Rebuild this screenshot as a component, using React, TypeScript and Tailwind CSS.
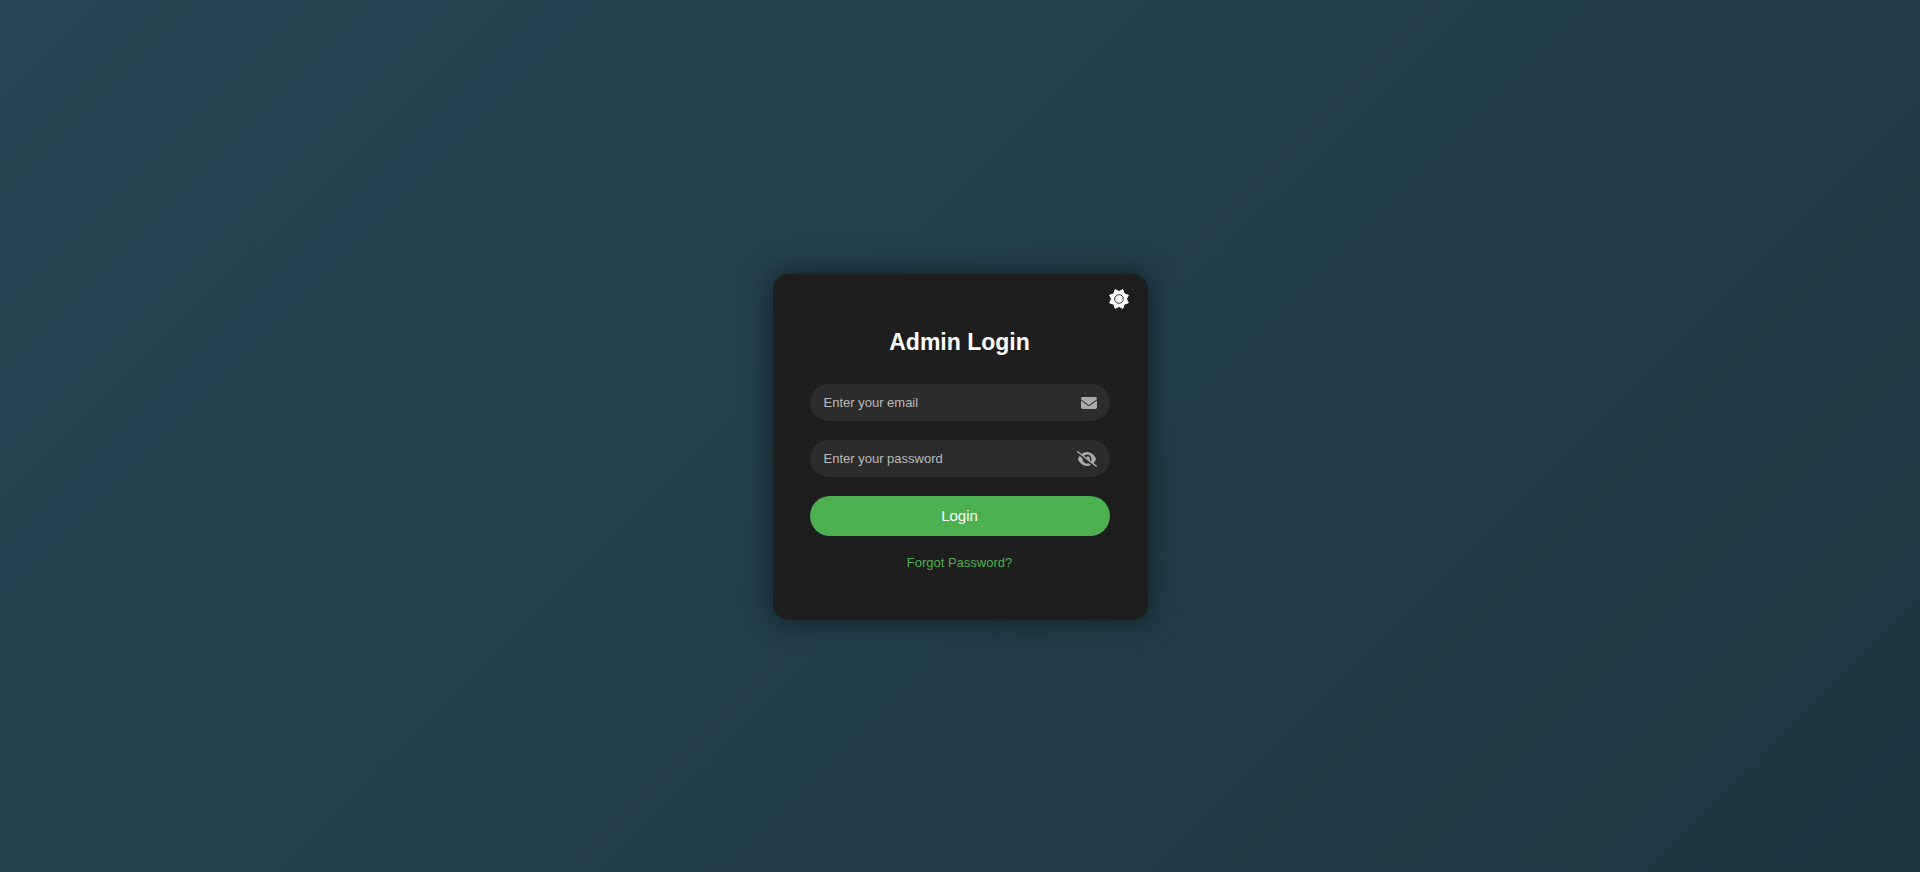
import { useState } from "react";
import { FaEnvelope, FaEye, FaEyeSlash } from "react-icons/fa6";

const fieldClass =
  "h-[37px] w-full rounded-full bg-[#2c2c2c] pr-12 pl-3.5 text-[13px] text-white outline-none placeholder:text-[#bbbbbb]";

function SunIcon() {
  return (
    <svg viewBox="-10 -10 20 20" className="size-5" aria-hidden="true">
      <path
        d="M0-7.4 3.8-9.4 5.2-5.2 9.4-3.8 7.4 0 9.4 3.8 5.2 5.2 3.8 9.4 0 7.4-3.8 9.4-5.2 5.2-9.4 3.8-7.4 0-9.4-3.8-5.2-5.2-3.8-9.4Z"
        fill="currentColor"
        stroke="currentColor"
        strokeWidth="1"
        strokeLinejoin="round"
      />
      <circle r="4.3" fill="none" stroke="#1e1e1e" strokeWidth="0.9" />
    </svg>
  );
}

export default function App() {
  const [visible, setVisible] = useState(false);

  return (
    <main className="flex min-h-screen items-center justify-center bg-[linear-gradient(135deg,#264653,#1e3640)] p-4 pt-[38px] font-['Liberation_Sans',Arial,sans-serif]">
      <section className="relative w-full max-w-[375px] rounded-[15px] bg-[#1e1e1e] pt-[53px] pr-[38px] pb-12 pl-[37px] text-center shadow-[0_0_30px_rgba(0,0,0,0.5)]">
        <button
          type="button"
          aria-label="Toggle theme"
          className="absolute top-[15px] right-[19px] text-white"
        >
          <SunIcon />
        </button>
        <h1 className="mb-[27px] text-[23px] leading-[30px] font-bold text-white">Admin Login</h1>
        <form className="flex flex-col gap-[19px]" onSubmit={(e) => e.preventDefault()}>
          <div className="relative">
            <input type="email" aria-label="Email" placeholder="Enter your email" className={fieldClass} />
            <span className="pointer-events-none absolute inset-y-0 right-[13px] flex items-center text-[#aaaaaa]">
              <FaEnvelope size={16} />
            </span>
          </div>
          <div className="relative">
            <input
              type={visible ? "text" : "password"}
              aria-label="Password"
              placeholder="Enter your password"
              className={fieldClass}
            />
            <button
              type="button"
              aria-label="Show password"
              onClick={() => setVisible(!visible)}
              className="absolute inset-y-0 right-[13px] flex items-center text-[#aaaaaa]"
            >
              {visible ? <FaEye className="h-4 w-5" /> : <FaEyeSlash className="h-4 w-5" />}
            </button>
          </div>
          <button type="submit" className="h-10 w-full rounded-full bg-[#4caf50] text-[15px] text-white">
            Login
          </button>
        </form>
        <a href="#" className="mx-auto mt-[18px] block w-fit text-[13px] leading-[18px] text-[#4caf50]">
          Forgot Password?
        </a>
      </section>
    </main>
  );
}
